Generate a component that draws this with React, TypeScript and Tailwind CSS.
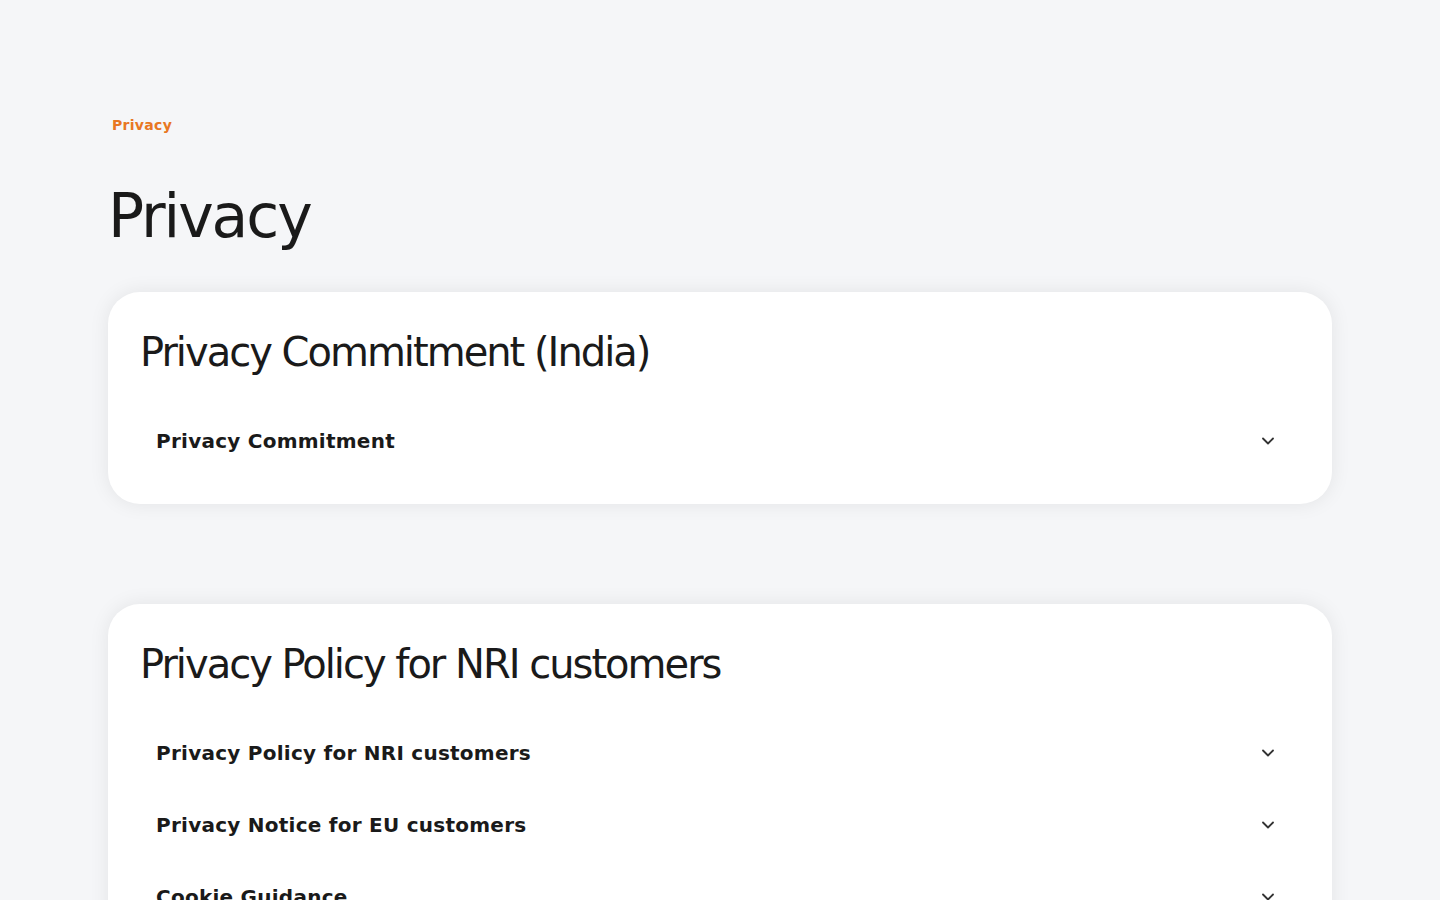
import { ChevronDown } from "lucide-react";

const sections = [
  {
    title: "Privacy Commitment (India)",
    items: ["Privacy Commitment"],
  },
  {
    title: "Privacy Policy for NRI customers",
    items: [
      "Privacy Policy for NRI customers",
      "Privacy Notice for EU customers",
      "Cookie Guidance",
    ],
  },
];

function AccordionRow({ label }: { label: string }) {
  return (
    <button className="flex h-[72px] w-full items-center justify-between px-4 text-left">
      <span className="text-[20px] font-bold tracking-[0.25px] text-[#1a1a1a]">{label}</span>
      <ChevronDown className="mr-[6px] h-5 w-5 text-[#333]" strokeWidth={2.2} aria-hidden="true" />
    </button>
  );
}

export default function App() {
  return (
    <div
      className="min-h-screen bg-[#f5f6f8] pt-[115px] pb-24"
      style={{ fontFamily: '"DejaVu Sans", "Noto Sans", sans-serif' }}
    >
      <div className="mx-auto w-[1224px]">
        <nav className="pl-1 text-[14px] font-bold leading-5 tracking-[0.3px] text-[#e87722]">
          Privacy
        </nav>

        <h1 className="mt-[45px] text-[60px] leading-[72px] tracking-[-0.035em] text-[#1a1a1a]">Privacy</h1>

        <div className="mt-[40px] flex flex-col gap-[100px]">
          {sections.map((s) => (
            <section
              key={s.title}
              className="rounded-[32px] bg-white px-8 pt-[36px] pb-[27px] shadow-[0_0_20px_rgba(0,0,0,0.08)]"
            >
              <h2 className="text-[40px] leading-[48px] tracking-[-0.05em] text-[#1a1a1a]">{s.title}</h2>
              <div className="mt-[29px] flex flex-col">
                {s.items.map((item) => (
                  <AccordionRow key={item} label={item} />
                ))}
              </div>
            </section>
          ))}
        </div>
      </div>
    </div>
  );
}
